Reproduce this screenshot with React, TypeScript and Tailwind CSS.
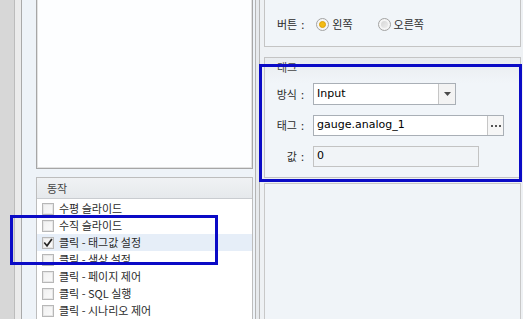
import React from "react";

const KR = { fontFamily: '"Noto Sans CJK KR", "Noto Sans", sans-serif' };
const EN = { fontFamily: '"DejaVu Sans", "Liberation Sans", sans-serif' };

function CheckBox({ checked }: { checked?: boolean }) {
  return (
    <div className="w-[12px] h-[12px] border border-[#b7b7b7] bg-gradient-to-br from-[#f0f0f0] to-[#fbfbfb] shadow-[inset_0_0_0_1px_#e6e6e6] flex items-center justify-center shrink-0">
      {checked && (
        <svg width="10" height="10" viewBox="0 0 10 10">
          <path d="M1.8 5.2 L4 7.8 L8.4 1.6" fill="none" stroke="#262626" strokeWidth="1.7" strokeLinecap="square" />
        </svg>
      )}
    </div>
  );
}

function Radio({ checked }: { checked?: boolean }) {
  return (
    <div className="w-[13px] h-[13px] rounded-full border border-[#a3a3a3] bg-[#f5f5f5] flex items-center justify-center shrink-0">
      {checked ? (
        <div className="w-[7px] h-[7px] rounded-full bg-[#f3bb12] border border-[#dca20a]" />
      ) : (
        <div className="w-[7px] h-[7px] rounded-full bg-gradient-to-br from-[#d6d6d6] to-[#eeeeee]" />
      )}
    </div>
  );
}

function Label({ text }: { text: string }) {
  return (
    <div className="w-[48px] pr-[9px] flex justify-end items-center">
      <span>{text}</span>
      <span className="ml-[4px]">:</span>
    </div>
  );
}

const items = [
  "수평 슬라이드",
  "수직 슬라이드",
  "클릭 - 태그값 설정",
  "클릭 - 색상 설정",
  "클릭 - 페이지 제어",
  "클릭 - SQL 실행",
  "클릭 - 시나리오 제어",
];

export default function App() {
  return (
    <div className="relative w-[523px] h-[319px] overflow-hidden flex bg-[#eef2f6] text-[11px] text-[#2b2b2b]" style={KR}>
      {/* left window chrome */}
      <div className="w-[15px] h-full bg-[#d7d7d7] border-r border-[#bcbcbc]" />
      <div className="w-[7px] h-full bg-[#ebebeb] border-r border-[#a9a9a9]" />

      {/* left panel */}
      <div className="w-[234px] h-full bg-[#eef3f8] pl-[14px] pr-[2px] border-r border-[#b4b4b4] flex flex-col">
        <div className="h-[169px] shrink-0 bg-[#fdfeff] border border-t-0 border-[#a6a6a6] shadow-[inset_1px_0_0_#e2e2e2,inset_-1px_0_0_#e2e2e2,inset_0_-1px_0_#e2e2e2]" />
        <div className="mt-[8px] flex-1 border border-b-0 border-[#bdbdbd] bg-white flex flex-col">
          <div className="h-[21px] shrink-0 border-b border-[#c9ccd0] bg-gradient-to-b from-[#f0f2f4] to-[#e6e9ec] pl-[10px] flex items-center text-[#444]">
            동작
          </div>
          <div className="pt-[1px] flex flex-col">
            {items.map((t, i) => (
              <div
                key={t}
                className={`h-[17px] flex items-center gap-[5px] pl-[5px] leading-[17px] text-[#2a2a2a] ${i === 2 ? "bg-[#e6eef8]" : ""}`}
              >
                <CheckBox checked={i === 2} />
                <span className="whitespace-pre">{t}</span>
              </div>
            ))}
          </div>
        </div>
      </div>

      {/* splitter */}
      <div className="w-[4px] h-full bg-[#e7eaed] border-r border-[#b6b6b6]" />

      {/* right panel */}
      <div className="flex-1 h-full bg-[#eef1f4] pl-[4px] pr-[2px] flex flex-col">
        {/* 버튼 group */}
        <div className="h-[47px] shrink-0 border border-t-0 border-[#c4c4c4] bg-[#f1f5f9] flex items-start pt-[16px] pl-[12px]">
          <div className="flex items-center h-[17px] leading-[17px]">
            <span>버튼</span>
            <span className="ml-[4px]">:</span>
            <div className="ml-[12px]"><Radio checked /></div>
            <span className="ml-[3px]">왼쪽</span>
            <div className="ml-[25px]"><Radio /></div>
            <span className="ml-[3px]">오른쪽</span>
          </div>
        </div>

        {/* 태그 group */}
        <div className="mt-[10px] h-[121px] shrink-0 border border-[#c4c4c4] bg-[#f1f5f9] flex flex-col">
          <div className="h-[25px] shrink-0 pl-[12px] pt-[3px] leading-[13px] text-[#444] bg-gradient-to-b from-[#e9ecef] to-[#f1f5f9]">
            태그
          </div>
          <div className="h-[22px] flex items-center">
            <Label text="방식" />
            <div className="w-[143px] h-[22px] bg-white border border-[#a9afb6] flex items-center">
              <span className="flex-1 pl-[3px] text-[11px] text-black" style={EN}>Input</span>
              <div className="w-[17px] h-full border-l border-[#c6c6c6] bg-[#f3f3f3] flex items-center justify-center">
                <svg width="7" height="4" viewBox="0 0 7 4"><path d="M0 0 H7 L3.5 4 Z" fill="#4a4a4a" /></svg>
              </div>
            </div>
          </div>
          <div className="mt-[10px] h-[21px] flex items-center">
            <Label text="태그" />
            <div className="w-[191px] h-[21px] bg-white border border-[#a9afb6] flex items-center">
              <span className="flex-1 pl-[3px] text-[11px] text-black" style={EN}>gauge.analog_1</span>
              <div className="w-[16px] h-full border-l border-[#c6c6c6] bg-[#f6f6f6] flex items-center justify-center gap-[2px]">
                <div className="w-[2px] h-[2px] bg-[#555]" />
                <div className="w-[2px] h-[2px] bg-[#555]" />
                <div className="w-[2px] h-[2px] bg-[#555]" />
              </div>
            </div>
          </div>
          <div className="mt-[10px] h-[21px] flex items-center">
            <Label text="값" />
            <div className="w-[166px] h-[21px] bg-[#f1f4f7] border border-[#c3c3c3] flex items-center">
              <span className="pl-[3px] text-[11px] text-black" style={EN}>0</span>
            </div>
          </div>
        </div>

        {/* lower group */}
        <div className="mt-[5px] flex-1 border border-b-0 border-[#c8c8c8] bg-[#f0f4f8]" />
      </div>

      {/* annotation rectangles */}
      <div className="absolute left-[10px] top-[215px] w-[208px] h-[50px] border-[3px] border-[#0b0bc6] pointer-events-none" />
      <div className="absolute left-[259px] top-[64px] w-[263px] h-[118px] border-[3px] border-[#0b0bc6] pointer-events-none" />
    </div>
  );
}
